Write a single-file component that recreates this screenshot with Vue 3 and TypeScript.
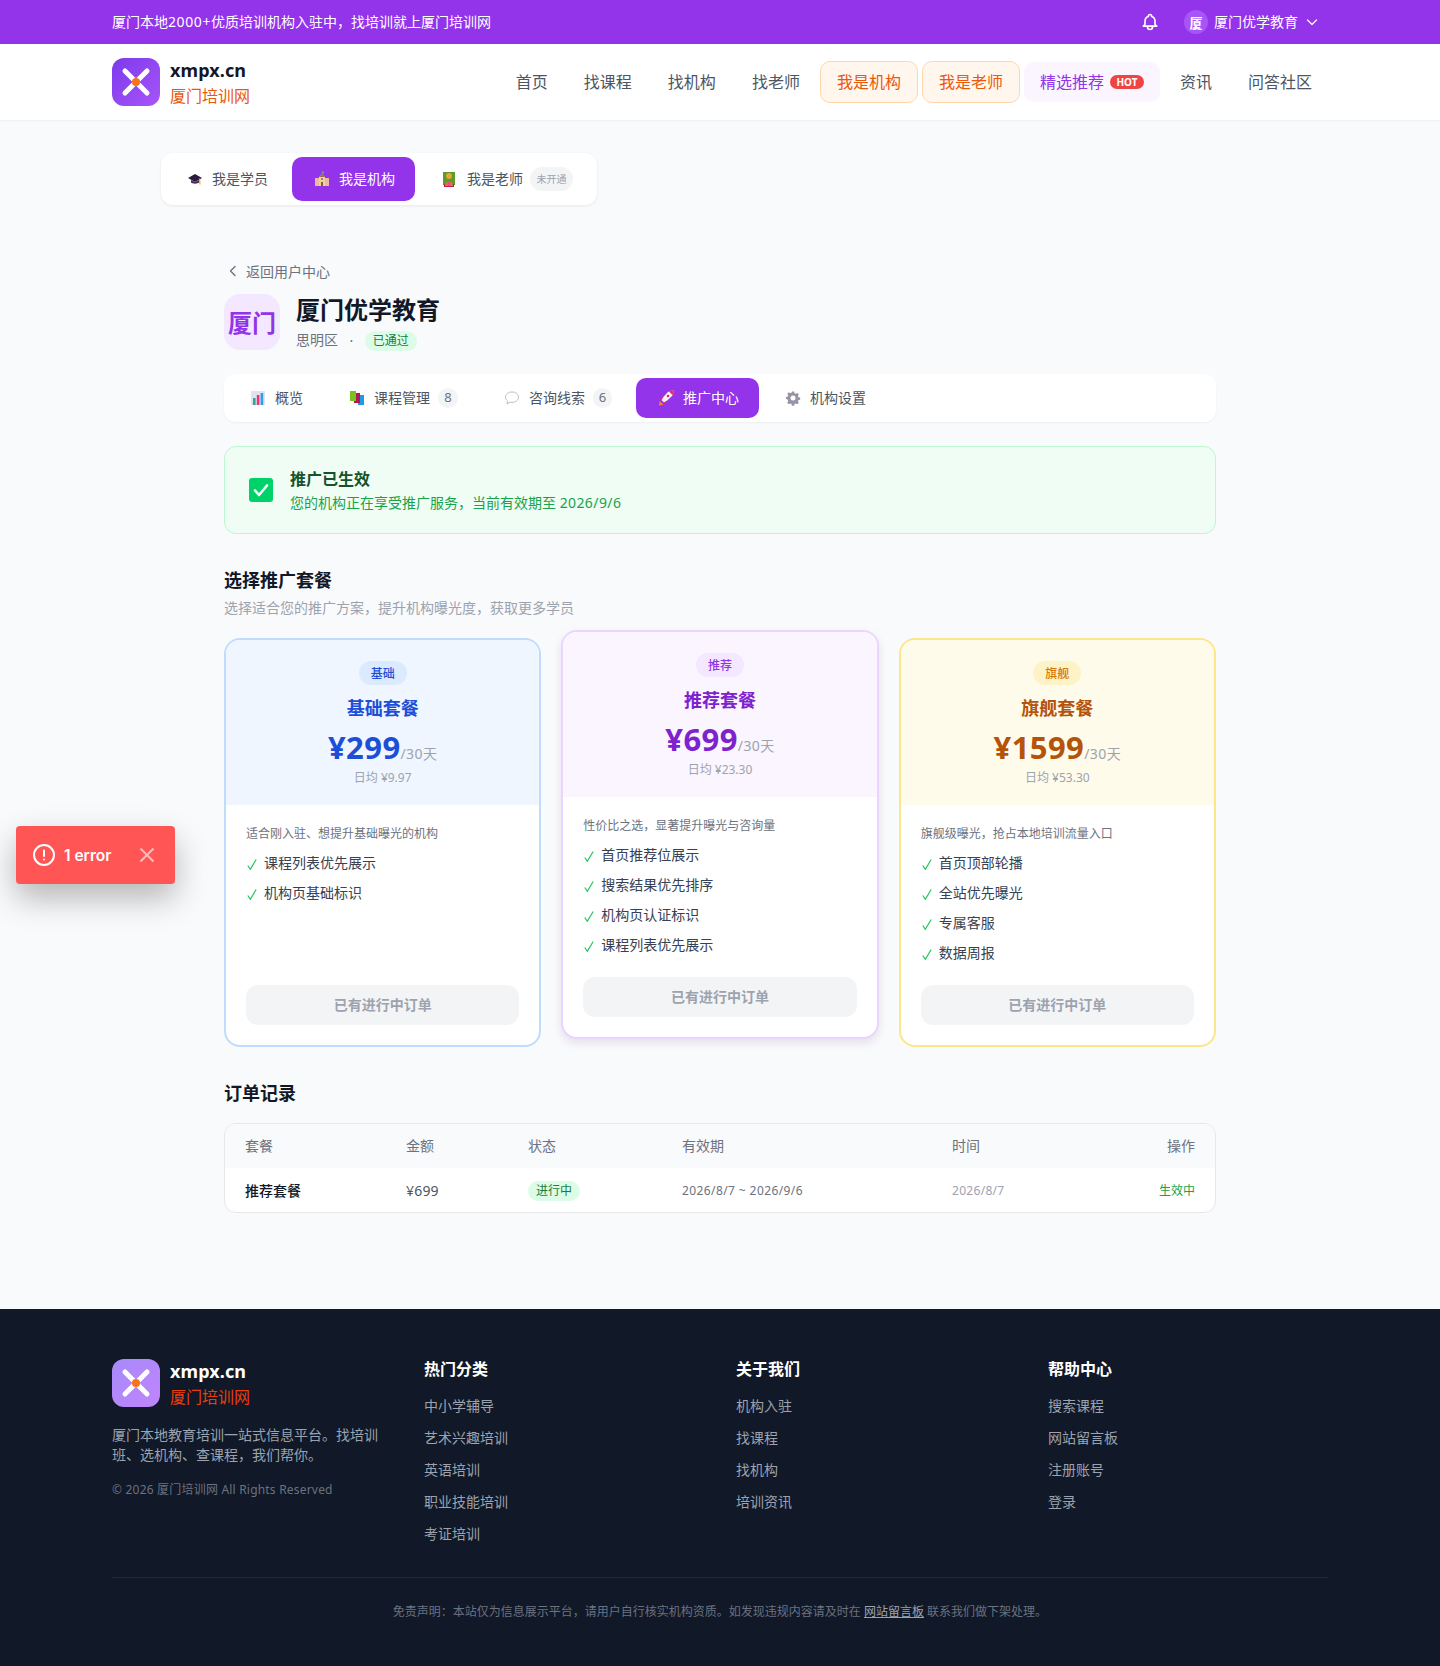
<script setup lang="ts">
import { ref } from "vue";

const navLinks = ["首页", "找课程", "找机构", "找老师"];

const plans = [
  {
    key: "basic",
    tag: "基础",
    name: "基础套餐",
    price: "¥299",
    daily: "日均 ¥9.97",
    desc: "适合刚入驻、想提升基础曝光的机构",
    features: ["课程列表优先展示", "机构页基础标识"],
  },
  {
    key: "pro",
    tag: "推荐",
    name: "推荐套餐",
    price: "¥699",
    daily: "日均 ¥23.30",
    desc: "性价比之选，显著提升曝光与咨询量",
    features: ["首页推荐位展示", "搜索结果优先排序", "机构页认证标识", "课程列表优先展示"],
  },
  {
    key: "flag",
    tag: "旗舰",
    name: "旗舰套餐",
    price: "¥1599",
    daily: "日均 ¥53.30",
    desc: "旗舰级曝光，抢占本地培训流量入口",
    features: ["首页顶部轮播", "全站优先曝光", "专属客服", "数据周报"],
  },
];

const footerCols = [
  { title: "热门分类", links: ["中小学辅导", "艺术兴趣培训", "英语培训", "职业技能培训", "考证培训"] },
  { title: "关于我们", links: ["机构入驻", "找课程", "找机构", "培训资讯"] },
  { title: "帮助中心", links: ["搜索课程", "网站留言板", "注册账号", "登录"] },
];

const showToast = ref(true);
</script>

<template>
  <div class="page">
    <div class="topbar">
      <div class="wrap topbar-in">
        <span class="banner">厦门本地<span class="num">2000+</span>优质培训机构入驻中，找培训就上厦门培训网</span>
        <div class="topbar-right">
          <svg class="bell" width="20" height="20" viewBox="0 0 24 24" fill="none" stroke="#fff" stroke-width="2" stroke-linecap="round" stroke-linejoin="round">
            <path d="M15 17h5l-1.4-1.4A2 2 0 0 1 18 14.2V11a6 6 0 0 0-4-5.7V5a2 2 0 1 0-4 0v.3A6 6 0 0 0 6 11v3.2c0 .5-.2 1-.6 1.4L4 17h5m6 0v1a3 3 0 1 1-6 0v-1m6 0H9" />
          </svg>
          <div class="user">
            <span class="avatar">厦</span>
            <span class="banner">厦门优学教育</span>
            <svg width="12" height="12" viewBox="0 0 24 24" fill="none" stroke="#fff" stroke-width="2.4" stroke-linecap="round" stroke-linejoin="round">
              <path d="M3 8l9 9 9-9" />
            </svg>
          </div>
        </div>
      </div>
    </div>

    <header class="nav">
      <div class="wrap nav-in">
        <div class="brand">
          <svg class="logo" width="48" height="48" viewBox="0 0 48 48">
            <defs>
              <linearGradient id="lg1" x1="0" y1="0" x2="1" y2="1">
                <stop offset="0" stop-color="#7c3aed" />
                <stop offset="1" stop-color="#a855f7" />
              </linearGradient>
            </defs>
            <rect width="48" height="48" rx="12" fill="url(#lg1)" />
            <path d="M13 13l22 22M35 13L13 35" stroke="#fff" stroke-width="5" stroke-linecap="round" />
            <circle cx="24" cy="24" r="4" fill="#f97316" />
          </svg>
          <div class="brand-text">
            <div class="brand-en">xmpx.cn</div>
            <div class="brand-cn">厦门培训网</div>
          </div>
        </div>
        <nav class="nav-links">
          <a v-for="l in navLinks" :key="l" class="nav-link">{{ l }}</a>
          <a class="nav-link orange">我是机构</a>
          <a class="nav-link orange">我是老师</a>
          <a class="nav-link featured">精选推荐<span class="hot">HOT</span></a>
          <a class="nav-link">资讯</a>
          <a class="nav-link">问答社区</a>
        </nav>
      </div>
    </header>

    <div class="role-row">
      <div class="role-card">
        <div class="role-tab">
          <svg class="emoji" viewBox="0 0 16 16">
            <path d="M8 3L1 7l7 4 7-4z" fill="#2d1b3d" />
            <path d="M4 9v2.5c1 1.5 7 1.5 8 0V9L8 11z" fill="#4a2c5e" />
            <path d="M12.5 7.5l.5 6" stroke="#f2a51f" stroke-width="1.2" fill="none" />
          </svg>
          <span class="lift">我是学员</span>
        </div>
        <div class="role-tab active">
          <svg class="emoji" viewBox="0 0 16 16">
            <rect x="1" y="7" width="14" height="8" fill="#e8b9a5" />
            <path d="M5 15V6l3-3 3 3v9z" fill="#f3cf9b" />
            <path d="M5 6l3-3 3 3z" fill="#a9692f" />
            <rect x="7" y="11" width="2" height="4" fill="#8d5a2b" />
            <rect x="7" y="7" width="2" height="2" fill="#6b8fc9" />
            <rect x="7.6" y="0.5" width="2.4" height="2" fill="#3fb58e" />
          </svg>
          <span class="lift">我是机构</span>
        </div>
        <div class="role-tab teacher">
          <svg class="emoji" viewBox="0 0 16 16">
            <rect x="2" y="1" width="12" height="13" fill="#5d9b2e" />
            <rect x="3" y="13" width="10" height="3" fill="#c2185b" />
            <circle cx="8" cy="5" r="3" fill="#e8a33a" />
            <path d="M4 15c0-6 8-6 8 0z" fill="#c98a2b" />
            <rect x="6.5" y="10" width="3" height="5" fill="#e94e77" />
          </svg>
          <span class="lift">我是老师</span>
          <span class="off-badge">未开通</span>
        </div>
      </div>
    </div>

    <main class="content">
      <div class="back">
        <svg width="12" height="12" viewBox="0 0 12 12" fill="none" stroke="#6b7280" stroke-width="1.4" stroke-linecap="round" stroke-linejoin="round">
          <path d="M8 1.5L3.5 6 8 10.5" />
        </svg>
        <span>返回用户中心</span>
      </div>

      <div class="org">
        <div class="org-logo"><span class="lift">厦门</span></div>
        <div>
          <h1 class="org-name">厦门优学教育</h1>
          <div class="org-meta">
            <span class="lift">思明区</span>
            <span class="dot">·</span>
            <span class="pass">已通过</span>
          </div>
        </div>
      </div>

      <div class="tabs">
        <div class="tab">
          <svg class="emoji" viewBox="0 0 16 16">
            <rect x="1" y="1" width="14" height="14" fill="#e4e1ec" />
            <rect x="3" y="8" width="2.6" height="7" fill="#2aa8a0" />
            <rect x="6.8" y="5" width="2.6" height="10" fill="#e9357f" />
            <rect x="10.6" y="3" width="2.6" height="12" fill="#2e9fe6" />
          </svg>
          <span class="lift">概览</span>
        </div>
        <div class="tab">
          <svg class="emoji" viewBox="0 0 16 16">
            <rect x="9" y="5" width="6" height="10" fill="#1e9be8" />
            <rect x="5" y="3" width="6" height="10" fill="#b5174f" />
            <rect x="1" y="1" width="6" height="10" fill="#7ac21f" />
          </svg>
          <span class="lift">课程管理</span><span class="count">8</span>
        </div>
        <div class="tab">
          <svg class="emoji" viewBox="0 0 16 16" fill="#fff" stroke="#bdbdc4" stroke-width="1">
            <path d="M8 2c3.6 0 6.500 2.200 6.500 5.200S11.600 12.400 8 12.400c-.7 0-1.400-.1-2-.3l-3 2 .6-3C2.300 10 1.500 8.700 1.500 7.200 1.500 4.200 4.400 2 8 2z" />
          </svg>
          <span class="lift">咨询线索</span><span class="count narrow">6</span>
        </div>
        <div class="tab active">
          <svg class="emoji" viewBox="0 0 16 16">
            <path d="M1 15.500l.8-4.500 3.700 3.700z" fill="#f9803c" />
            <path d="M3 9.500L9.500 2.500C11 1 13.500 .3 15.500 .5 15.700 2.500 15 5 13.500 6.500L6.500 13z" fill="#f6f1f6" />
            <path d="M11 1.500C12.500 .7 14 .3 15.500 .5c.2 1.500-.2 3-1 4.500z" fill="#e8265e" />
            <path d="M2 8.500l3.500-1.500-2.500 4zM7.500 14l1.500-3.500-4 2.500z" fill="#e8265e" />
            <circle cx="10" cy="6" r="1.300" fill="#e8265e" />
          </svg>
          <span class="lift">推广中心</span>
        </div>
        <div class="tab">
          <svg class="emoji" viewBox="0 0 16 16">
            <path d="M6.700 1h2.600l.4 2 1.300.6 1.800-1 1.800 1.800-1 1.800.5 1.300 2 .4v2.400l-2 .4-.5 1.300 1 1.800-1.800 1.800-1.800-1-1.300.5-.4 2H6.700l-.4-2-1.300-.5-1.800 1-1.800-1.800 1-1.800L1.900 10 0 9.600V7.200l2-.4.500-1.300-1-1.800 1.800-1.800 1.800 1 1.300-.6z" fill="#9a93a8" transform="translate(1 .6) scale(.88)" />
            <circle cx="8" cy="8" r="2.500" fill="#fff" />
          </svg>
          <span class="lift">机构设置</span>
        </div>
      </div>

      <div class="alert">
        <svg class="alert-icon" width="24" height="24" viewBox="0 0 24 24">
          <rect width="24" height="24" rx="3" fill="#00d26a" />
          <path d="M6 12.500l4 4.500 8-9.500" fill="none" stroke="#fff" stroke-width="2.600" stroke-linecap="round" stroke-linejoin="round" />
        </svg>
        <div>
          <div class="alert-title">推广已生效</div>
          <div class="alert-sub">您的机构正在享受推广服务，当前有效期至 <span class="date">2026/9/6</span></div>
        </div>
      </div>

      <h2 class="sec-title">选择推广套餐</h2>
      <p class="sec-sub">选择适合您的推广方案，提升机构曝光度，获取更多学员</p>

      <div class="plans">
        <div v-for="p in plans" :key="p.key" class="plan" :class="p.key">
          <div class="plan-head">
            <span class="plan-tag">{{ p.tag }}</span>
            <div class="plan-name">{{ p.name }}</div>
            <div class="plan-price"><b>{{ p.price }}</b><span>/30天</span></div>
            <div class="plan-daily">{{ p.daily }}</div>
          </div>
          <div class="plan-body">
            <p class="plan-desc">{{ p.desc }}</p>
            <ul class="plan-list">
              <li v-for="f in p.features" :key="f">
                <svg class="tick" width="10" height="11" viewBox="0 0 10 11" fill="none" stroke="#22c55e" stroke-width="1.2">
                  <path d="M.8 6.500L3.300 10.300 9.200 .5" />
                </svg>
                <span>{{ f }}</span>
              </li>
            </ul>
            <button class="plan-btn" disabled>已有进行中订单</button>
          </div>
        </div>
      </div>

      <h2 class="sec-title orders">订单记录</h2>
      <div class="table-box">
        <table>
          <colgroup>
            <col class="c1" />
            <col class="c2" />
            <col class="c3" />
            <col class="c4" />
            <col />
            <col class="c6" />
          </colgroup>
          <thead>
            <tr>
              <th>套餐</th>
              <th>金额</th>
              <th>状态</th>
              <th>有效期</th>
              <th>时间</th>
              <th class="right">操作</th>
            </tr>
          </thead>
          <tbody>
            <tr>
              <td class="t-name">推荐套餐</td>
              <td class="t-amt">¥699</td>
              <td><span class="pass">进行中</span></td>
              <td class="t-range">2026/8/7 ~ 2026/9/6</td>
              <td class="t-time">2026/8/7</td>
              <td class="right t-state">生效中</td>
            </tr>
          </tbody>
        </table>
      </div>
    </main>

    <footer class="footer">
      <div class="wrap">
        <div class="foot-grid">
          <div>
            <div class="brand">
              <svg class="logo" width="48" height="48" viewBox="0 0 48 48">
                <defs>
                  <linearGradient id="lg2" x1="0" y1="0" x2="1" y2="1">
                    <stop offset="0" stop-color="#a78bfa" />
                    <stop offset="1" stop-color="#c084fc" />
                  </linearGradient>
                </defs>
                <rect width="48" height="48" rx="12" fill="url(#lg2)" />
                <path d="M13 13l22 22M35 13L13 35" stroke="#fff" stroke-width="5" stroke-linecap="round" />
                <circle cx="24" cy="24" r="4" fill="#f97316" />
              </svg>
              <div class="brand-text">
                <div class="brand-en white">xmpx.cn</div>
                <div class="brand-cn red">厦门培训网</div>
              </div>
            </div>
            <p class="foot-desc">厦门本地教育培训一站式信息平台。找培训班、选机构、查课程，我们帮你。</p>
            <p class="foot-copy">© 2026 厦门培训网 All Rights Reserved</p>
          </div>
          <div v-for="c in footerCols" :key="c.title">
            <div class="foot-title">{{ c.title }}</div>
            <a v-for="l in c.links" :key="l" class="foot-link">{{ l }}</a>
          </div>
        </div>
        <div class="foot-bottom">
          免责声明：本站仅为信息展示平台，请用户自行核实机构资质。如发现违规内容请及时在 <a>网站留言板</a> 联系我们做下架处理。
        </div>
      </div>
    </footer>

    <div v-if="showToast" class="toast">
      <svg width="24" height="24" viewBox="0 0 24 24" fill="none" stroke="#fff" stroke-width="2" stroke-linecap="round">
        <circle cx="12" cy="12" r="10" />
        <path d="M12 7.500v5.500M12 16.500v.1" />
      </svg>
      <span class="toast-text">1 error</span>
      <svg class="toast-x" width="16" height="16" viewBox="0 0 16 16" fill="none" stroke="#fff" stroke-opacity=".6" stroke-width="2" @click="showToast = false">
        <path d="M1.500 1.500l13 13M14.500 1.500l-13 13" />
      </svg>
    </div>
  </div>
</template>

<style>
body {
  background: #f9fafb;
}
</style>

<style scoped>
.page {
  position: relative;
  width: 1440px;
  min-height: 1666px;
  background: #f9fafb;
  font-family: "Noto Sans", "Noto Sans CJK SC", sans-serif;
  color: #111827;
  font-size: 14px;
}
.wrap {
  width: 1216px;
  margin: 0 auto;
}
/* text sits a pixel low in the line box with this stack */
.lift {
  padding-bottom: 2px;
}
.topbar {
  height: 44px;
  background: #9333ea;
  color: #fff;
}
.topbar-in {
  height: 44px;
  display: flex;
  align-items: center;
  justify-content: space-between;
}
.banner {
  padding-bottom: 2px;
}
.num {
  letter-spacing: 0.6px;
}
.topbar-right {
  display: flex;
  align-items: center;
}
.bell {
  margin-right: 24px;
}
.user {
  display: flex;
  align-items: center;
  gap: 6px;
  padding-right: 10px;
}
.avatar {
  width: 24px;
  height: 24px;
  border-radius: 50%;
  background: #a855f7;
  display: flex;
  align-items: center;
  justify-content: center;
  font-size: 13px;
  font-weight: 600;
}
.user svg {
  margin-left: 2px;
}
.nav {
  height: 76px;
  background: #fff;
  box-shadow: 0 1px 2px rgba(0, 0, 0, 0.05);
  position: relative;
}
.nav-in {
  height: 76px;
  display: flex;
  align-items: center;
  justify-content: space-between;
}
.brand {
  display: flex;
  align-items: center;
  gap: 10px;
}
.logo {
  display: block;
}
.brand-en {
  font-size: 18px;
  font-weight: 700;
  line-height: 24px;
  letter-spacing: 0.1px;
  color: #111827;
}
.brand-en.white {
  color: #fff;
}
.brand-cn {
  font-size: 16px;
  line-height: 24px;
  margin: 2px 0 -2px;
  color: #ea580c;
}
.brand-cn.red {
  color: #ea3f0c;
}
.nav-links {
  display: flex;
  align-items: center;
  gap: 4px;
}
.nav-link {
  font-size: 16px;
  padding: 8px 16px;
  line-height: 24px;
  color: #4b5563;
  border-radius: 10px;
  display: flex;
  align-items: center;
}
.nav-link.orange {
  color: #ea580c;
  background: #fff7ed;
  border: 1px solid #fed7aa;
}
.nav-link.featured {
  color: #9333ea;
  background: #faf5ff;
}
.hot {
  margin-left: 6px;
  background: #ef4444;
  color: #fff;
  font-size: 10px;
  font-weight: 700;
  line-height: 14px;
  padding: 0 6.5px;
  border-radius: 8px;
}
.role-row {
  width: 1118px;
  margin: 0 auto;
  padding-top: 33px;
}
.role-card {
  display: inline-flex;
  align-items: center;
  gap: 4px;
  padding: 4px;
  background: #fff;
  border-radius: 12px;
  box-shadow: 0 1px 3px rgba(0, 0, 0, 0.08);
}
.role-tab {
  height: 44px;
  padding: 0 20px;
  display: flex;
  align-items: center;
  color: #4b5563;
  border-radius: 10px;
}
.role-tab.active,
.tab.active {
  background: #9333ea;
  color: #fff;
}
.emoji {
  width: 16px;
  height: 16px;
  margin: 0 9px 0 2px;
  flex: none;
}
.teacher .emoji {
  margin-right: 10px;
}
.off-badge {
  margin-left: 7px;
  padding: 0 6.5px;
  height: 24px;
  line-height: 24px;
  font-size: 10px;
  color: #9ca3af;
  background: #f3f4f6;
  border-radius: 12px;
}
.content {
  width: 992px;
  margin: 0 auto;
  padding-bottom: 96px;
}
.back {
  margin-top: 56px;
  height: 20px;
  display: flex;
  align-items: center;
  gap: 3px;
  padding-left: 2px;
  color: #6b7280;
}
.back svg {
  margin-right: 4px;
  margin-left: 1px;
}
.org {
  margin-top: 13px;
  display: flex;
  align-items: center;
  gap: 16px;
}
.org-logo {
  width: 56px;
  height: 56px;
  border-radius: 16px;
  background: #f3e8ff;
  color: #9333ea;
  font-size: 24px;
  font-weight: 700;
  display: flex;
  align-items: center;
  justify-content: center;
}
.org-name {
  margin: 0;
  font-size: 24px;
  font-weight: 700;
  line-height: 32px;
}
.org-meta {
  display: flex;
  align-items: center;
  color: #6b7280;
  margin-top: 4px;
  height: 20px;
}
.dot {
  margin: 0 11.5px;
}
.pass {
  display: inline-block;
  vertical-align: middle;
  height: 20px;
  line-height: 20px;
  padding: 0 8px;
  margin-top: 1px;
  font-size: 12px;
  color: #15803d;
  background: #dcfce7;
  border-radius: 10px;
}
.tabs {
  margin-top: 24px;
  padding: 4px;
  height: 48px;
  box-sizing: border-box;
  background: #fff;
  border-radius: 12px;
  box-shadow: 0 1px 2px rgba(0, 0, 0, 0.05);
  display: flex;
  gap: 4px;
}
.tab {
  height: 40px;
  padding: 0 20px;
  display: flex;
  align-items: center;
  color: #4b5563;
  border-radius: 10px;
}
.count {
  margin-left: 8px;
  min-width: 20px;
  height: 20px;
  line-height: 19px;
  text-align: center;
  font-size: 13px;
  color: #6b7280;
  background: #f3f4f6;
  border-radius: 10px;
}
.count.narrow {
  min-width: 19px;
}
.alert {
  margin-top: 24px;
  height: 88px;
  box-sizing: border-box;
  padding: 0 24px;
  display: flex;
  align-items: center;
  gap: 17px;
  background: #f0fdf4;
  border: 1px solid #bbf7d0;
  border-radius: 12px;
}
.alert-title {
  font-size: 16px;
  font-weight: 600;
  line-height: 24px;
  padding-bottom: 2px;
  color: #14532d;
}
.alert-sub {
  line-height: 20px;
  color: #16a34a;
}
.date {
  letter-spacing: 0.4px;
}
.sec-title {
  margin: 32px 0 0;
  font-size: 18px;
  font-weight: 700;
  line-height: 28px;
}
.sec-sub {
  margin: 4px 0 0;
  line-height: 20px;
  color: #9ca3af;
}
.plans {
  margin-top: 20px;
  display: grid;
  grid-template-columns: repeat(3, 1fr);
  gap: 20px;
}
.plan {
  border: 2px solid;
  border-radius: 16px;
  overflow: hidden;
  background: #fff;
  display: flex;
  flex-direction: column;
  height: 409px;
  box-sizing: border-box;
}
.plan-head {
  height: 165px;
  box-sizing: border-box;
  padding-top: 21px;
  text-align: center;
}
.plan-tag {
  display: inline-block;
  height: 24px;
  line-height: 26px;
  padding: 0 12px;
  font-size: 12px;
  font-weight: 500;
  border-radius: 12px;
}
.plan-name {
  margin-top: 9px;
  font-size: 18px;
  font-weight: 700;
  line-height: 28px;
}
.plan-price {
  margin-top: 7px;
  height: 37px;
  line-height: 36px;
}
.plan-price b {
  font-size: 31px;
  font-weight: 700;
  letter-spacing: 0.4px;
}
.plan-price span {
  font-size: 14px;
  letter-spacing: 0.4px;
  color: #9ca3af;
}
.plan-daily {
  margin-top: 4px;
  font-size: 12px;
  line-height: 16px;
  color: #9ca3af;
}
.plan-body {
  flex: 1;
  padding: 20px;
  display: flex;
  flex-direction: column;
}
.plan-desc {
  margin: 1px 0 0;
  font-size: 12px;
  line-height: 16px;
  color: #6b7280;
}
.plan-list {
  list-style: none;
  margin: 11px 0 0;
  padding: 0;
  display: flex;
  flex-direction: column;
  gap: 10px;
}
.plan-list li {
  display: flex;
  align-items: center;
  gap: 7px;
  line-height: 20px;
  color: #374151;
}
.tick {
  flex: none;
  margin-top: 2px;
  margin-left: 1px;
}
.plan-btn {
  margin-top: auto;
  height: 40px;
  padding: 0 0 2px;
  border: 0;
  border-radius: 12px;
  background: #f3f4f6;
  color: #9ca3af;
  font: inherit;
  font-weight: 600;
}
.basic {
  border-color: #bfdbfe;
}
.basic .plan-head {
  background: #eff6ff;
}
.basic .plan-tag {
  background: #dbeafe;
  color: #1d4ed8;
}
.basic .plan-name,
.basic .plan-price b {
  color: #1d4ed8;
}
.pro {
  border-color: #e9d5ff;
  transform: translateY(-8px);
  box-shadow: 0 4px 8px rgba(88, 28, 135, 0.12);
}
.pro .plan-head {
  background: #faf5ff;
}
.pro .plan-tag {
  background: #f3e8ff;
  color: #9333ea;
}
.pro .plan-name,
.pro .plan-price b {
  color: #7e22ce;
}
.flag {
  border-color: #fde68a;
}
.flag .plan-head {
  background: #fffbeb;
}
.flag .plan-tag {
  background: #fef3c7;
  color: #d97706;
}
.flag .plan-name,
.flag .plan-price b {
  color: #b45309;
}
.sec-title.orders {
  margin-top: 32px;
}
.table-box {
  margin-top: 16px;
  background: #fff;
  border: 1px solid #e5e7eb;
  border-radius: 12px;
  overflow: hidden;
}
table {
  width: 100%;
  border-collapse: collapse;
  table-layout: fixed;
}
.c1 {
  width: 161px;
}
.c2 {
  width: 122px;
}
.c3 {
  width: 154px;
}
.c4 {
  width: 270px;
}
.c6 {
  width: 120px;
}
th,
td {
  padding: 0 20px;
  text-align: left;
}
th {
  height: 42px;
  padding-bottom: 2px;
  font-weight: 400;
  color: #6b7280;
  background: #f9fafb;
}
td {
  height: 44px;
  font-size: 12px;
}
th.right,
td.right {
  text-align: right;
}
td.t-name {
  font-size: 14px;
  font-weight: 500;
  color: #111827;
}
td.t-amt {
  font-size: 14px;
  letter-spacing: 0.2px;
  color: #4b5563;
}
.t-range {
  letter-spacing: 0.4px;
  color: #6b7280;
}
.t-time {
  letter-spacing: 0.3px;
  color: #9ca3af;
}
.t-state {
  color: #16a34a;
}
.footer {
  height: 357px;
  box-sizing: border-box;
  padding-top: 50px;
  background: #111827;
}
.foot-grid {
  display: grid;
  grid-template-columns: repeat(4, 272px);
  gap: 40px;
  height: 218px;
  border-bottom: 1px solid #1f2937;
}
.foot-desc {
  margin: 18px 0 0;
  line-height: 20px;
  color: #9ca3af;
}
.foot-copy {
  margin: 17px 0 0;
  font-size: 12px;
  line-height: 16px;
  letter-spacing: 0.2px;
  color: #6b7280;
}
.foot-title {
  font-size: 16px;
  font-weight: 600;
  line-height: 20px;
  color: #fff;
  margin-bottom: 17px;
}
.foot-link {
  display: block;
  line-height: 20px;
  margin-bottom: 12px;
  color: #9ca3af;
}
.foot-bottom {
  margin-top: 25px;
  text-align: center;
  font-size: 12px;
  line-height: 18px;
  color: #6b7280;
}
.foot-bottom a {
  color: #9ca3af;
  text-decoration: underline;
}
.toast {
  position: absolute;
  left: 16px;
  top: 826px;
  width: 159px;
  height: 58px;
  box-sizing: border-box;
  padding: 0 20px 0 16px;
  display: flex;
  align-items: center;
  background: #ff5555;
  border-radius: 4px;
  color: #fff;
  box-shadow: 0 14px 32px rgba(0, 0, 0, 0.28);
  font-family: Inter, sans-serif;
}
.toast-text {
  margin-left: 8px;
  font-size: 15.5px;
  font-weight: 600;
}
.toast-x {
  margin-left: auto;
}
</style>
